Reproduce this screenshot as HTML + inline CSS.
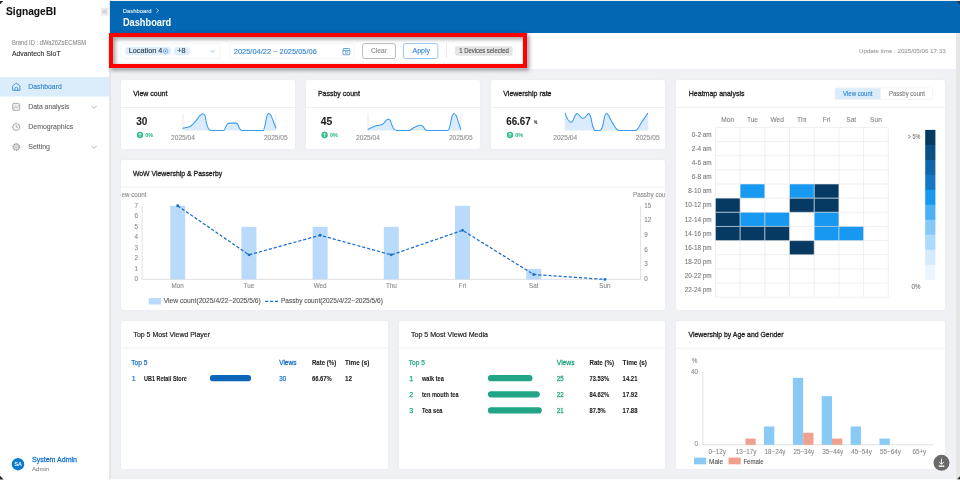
<!DOCTYPE html>
<html><head><meta charset="utf-8">
<style>
html,body{margin:0;padding:0}
body{width:960px;height:480px;overflow:hidden;position:relative;background:#f0f1f5;font-family:"Liberation Sans",sans-serif}
.a{position:absolute}
.card{position:absolute;background:#fff;border-radius:2px;box-shadow:0 0 1.5px rgba(0,0,0,0.07)}
svg{position:absolute;left:0;top:0;will-change:transform}
</style></head><body>
<div class="a" style="left:0;top:0;width:109px;height:480px;background:#fff"></div>
<div class="a" style="left:109px;top:0;width:1.5px;height:480px;background:#e4e5e9"></div>
<div class="a" style="left:110px;top:1px;width:850px;height:32px;background:#0467b3"></div>
<div class="a" style="left:110px;top:33px;width:846px;height:36px;background:#fff"></div>
<div class="a" style="left:956px;top:33px;width:4px;height:447px;background:#e6e6e6"></div>
<div class="a" style="left:110px;top:479px;width:846px;height:1px;background:#fbfbfc"></div>
<div class="card" style="left:121px;top:80px;width:174px;height:69px"></div>
<div class="card" style="left:305.6px;top:80px;width:174.7px;height:69px"></div>
<div class="card" style="left:491px;top:80px;width:174px;height:69px"></div>
<div class="card" style="left:676px;top:80px;width:269.3px;height:229.6px"></div>
<div class="card" style="left:121px;top:160px;width:544px;height:149.5px"></div>
<div class="card" style="left:121px;top:320.5px;width:267px;height:148.6px"></div>
<div class="card" style="left:398.7px;top:320.5px;width:266.3px;height:148.6px"></div>
<div class="card" style="left:676px;top:320.5px;width:269.3px;height:148.6px"></div>
<svg width="960" height="480" viewBox="0 0 960 480" font-family="Liberation Sans">
<text x="6" y="14.7" font-size="10.6" fill="#111" font-weight="bold" textLength="50" lengthAdjust="spacingAndGlyphs" stroke="#111" stroke-width="0.08">SignageBI</text>
<rect x="101" y="8" width="7.5" height="7.5" fill="#e9e9e9"/>
<path d="M104.4 10.2 L102.9 11.7 L104.4 13.2 M106.4 10.2 L104.9 11.7 L106.4 13.2" stroke="#9a9a9a" stroke-width="0.6" fill="none"/>
<text x="12" y="45.3" font-size="6.3" fill="#8e8e8e" textLength="74" lengthAdjust="spacingAndGlyphs" stroke="#8e8e8e" stroke-width="0.1">Brand ID : dWa26ZsECMSM</text>
<text x="12" y="56" font-size="7.1" fill="#2a2a2a" textLength="48.6" lengthAdjust="spacingAndGlyphs" stroke="#2a2a2a" stroke-width="0.1">Advantech SIoT</text>
<rect x="0" y="77" width="109" height="19.5" fill="#dbedfb"/>
<path d="M12.7 90.3 V86.6 Q12.7 85.8 13.4 85.2 L15.6 83.5 Q16.3 83 17 83.5 L19.2 85.2 Q19.9 85.8 19.9 86.6 V90.3 Z M14.9 90.3 V88.6 Q14.9 87.3 16.3 87.3 Q17.7 87.3 17.7 88.6 V90.3" stroke="#3f8fd8" stroke-width="0.95" fill="none" stroke-linejoin="round"/>
<text x="28.2" y="88.9" font-size="7.7" fill="#2f80d0" textLength="33.6" lengthAdjust="spacingAndGlyphs" stroke="#2f80d0" stroke-width="0.12">Dashboard</text>
<rect x="12.7" y="103.4" width="7.0" height="7.0" fill="#efefef" rx="1.3" stroke="#a8a8a8" stroke-width="0.9"/>
<path d="M13.2 109.0 L15.4 106.4 L17 107.6 L19.4 105.0" stroke="#a8a8a8" stroke-width="0.8" fill="none"/>
<text x="28.25" y="109.3" font-size="7.7" fill="#626262" textLength="41.1" lengthAdjust="spacingAndGlyphs" stroke="#626262" stroke-width="0.1">Data analysis</text>
<path d="M91.6 106.4 L94.1 108.2 L96.6 106.4" stroke="#9a9a9a" stroke-width="0.7" fill="none"/>
<circle cx="16.2" cy="127" r="3.5" fill="none" stroke="#9a9a9a" stroke-width="0.9"/>
<path d="M16.2 124.9 V127.2 H18.1" stroke="#9a9a9a" stroke-width="0.8" fill="none"/>
<text x="28.25" y="129.1" font-size="7.7" fill="#626262" textLength="44.9" lengthAdjust="spacingAndGlyphs" stroke="#626262" stroke-width="0.1">Demographics</text>
<circle cx="16.2" cy="147" r="3.2" fill="none" stroke="#9a9a9a" stroke-width="1.5" stroke-dasharray="1.2 0.8"/>
<circle cx="16.2" cy="147" r="2.4" fill="none" stroke="#9a9a9a" stroke-width="0.6"/>
<circle cx="16.2" cy="147" r="1.0" fill="none" stroke="#9a9a9a" stroke-width="0.6"/>
<text x="28.25" y="149.1" font-size="7.7" fill="#626262" textLength="21.75" lengthAdjust="spacingAndGlyphs" stroke="#626262" stroke-width="0.1">Setting</text>
<path d="M91.6 146.4 L94.1 148.2 L96.6 146.4" stroke="#9a9a9a" stroke-width="0.7" fill="none"/>
<circle cx="18" cy="464.2" r="6.2" fill="#0b7ad1"/>
<text x="18.1" y="466.3" font-size="5.4" fill="#fff" font-weight="bold" textLength="7.4" lengthAdjust="spacingAndGlyphs" text-anchor="middle">SA</text>
<text x="32" y="461.75" font-size="7.3" fill="#1a78d2" textLength="45" lengthAdjust="spacingAndGlyphs" stroke="#1a78d2" stroke-width="0.3">System Admin</text>
<text x="32" y="471" font-size="5.9" fill="#8a8a8a" textLength="17.2" lengthAdjust="spacingAndGlyphs" stroke="#8a8a8a" stroke-width="0.1">Admin</text>
<text x="122.7" y="12.6" font-size="6.2" fill="#e2edf7" textLength="28.8" lengthAdjust="spacingAndGlyphs" stroke="#e2edf7" stroke-width="0.1">Dashboard</text>
<path d="M156.4 8.6 L158.6 10.6 L156.4 12.6" stroke="#e2edf7" stroke-width="0.7" fill="none"/>
<text x="122.9" y="25.7" font-size="11.2" fill="#fff" font-weight="bold" textLength="48.3" lengthAdjust="spacingAndGlyphs">Dashboard</text>
<rect x="120.8" y="43.8" width="99.6" height="14.6" fill="#fff" rx="2" stroke="#ececec" stroke-width="0.6"/>
<rect x="125" y="47" width="46.2" height="8.2" fill="#dcedfb" rx="4"/>
<text x="128.8" y="53.1" font-size="7.0" fill="#354252" textLength="33.5" lengthAdjust="spacingAndGlyphs" stroke="#354252" stroke-width="0.15">Location 4</text>
<circle cx="165.6" cy="51.1" r="2.3" fill="none" stroke="#4a90d0" stroke-width="0.6"/><circle cx="165.6" cy="51.1" r="0.9" fill="#4a90d0"/>
<rect x="173.8" y="47" width="16.2" height="8.2" fill="#dcedfb" rx="4"/>
<text x="177.2" y="53.1" font-size="7.0" fill="#354252" textLength="8.3" lengthAdjust="spacingAndGlyphs" stroke="#354252" stroke-width="0.15">+8</text>
<path d="M210.6 50.4 L212.6 52.1 L214.6 50.4" stroke="#5a9ad8" stroke-width="0.6" fill="none"/>
<rect x="229.6" y="43.8" width="124.8" height="14.6" fill="#fff" rx="2" stroke="#ececec" stroke-width="0.6"/>
<text x="233.75" y="54" font-size="7.9" fill="#2f80d1" textLength="83.1" lengthAdjust="spacingAndGlyphs" stroke="#2f80d1" stroke-width="0.1">2025/04/22 ~ 2025/05/06</text>
<rect x="343" y="48.5" width="6.8" height="6.3" fill="#fff" rx="1" stroke="#3d8ad4" stroke-width="0.8"/>
<path d="M343 50.4 H349.8" stroke="#3d8ad4" stroke-width="0.8" fill="none"/>
<rect x="345.3" y="51.7" width="2.2" height="1.9" fill="none" stroke="#3d8ad4" stroke-width="0.5"/>
<rect x="362.6" y="43.6" width="32.9" height="14.9" fill="#fff" rx="2" stroke="#a9a9a9" stroke-width="0.8"/>
<text x="371" y="53.3" font-size="7.1" fill="#8c8c8c" textLength="16" lengthAdjust="spacingAndGlyphs" stroke="#8c8c8c" stroke-width="0.1">Clear</text>
<rect x="403.4" y="43.6" width="34.5" height="14.9" fill="#fff" rx="2" stroke="#7cb6ec" stroke-width="0.8"/>
<text x="412.5" y="53.3" font-size="7.1" fill="#2f80d1" textLength="17.5" lengthAdjust="spacingAndGlyphs" stroke="#2f80d1" stroke-width="0.1">Apply</text>
<path d="M446.5 43 V58.6" stroke="#e6e6e6" stroke-width="0.8" fill="none"/>
<rect x="455" y="46.3" width="57.6" height="9.5" fill="#e4e4e4" rx="2"/>
<text x="459.2" y="53.3" font-size="6.3" fill="#4f4f4f" textLength="49.7" lengthAdjust="spacingAndGlyphs" stroke="#4f4f4f" stroke-width="0.1">1 Devices selected</text>
<text x="859" y="52.8" font-size="6.2" fill="#9c9c9c" textLength="86.6" lengthAdjust="spacingAndGlyphs" stroke="#9c9c9c" stroke-width="0.1">Update time : 2025/05/06 17:33</text>
<text x="133.3" y="95.9" font-size="7.7" fill="#1f1f1f" textLength="34.1" lengthAdjust="spacingAndGlyphs" stroke="#1f1f1f" stroke-width="0.32">View count</text>
<path d="M121 107.5 H295" stroke="#ebebeb" stroke-width="0.8" fill="none"/>
<text x="136.2" y="124.5" font-size="10.6" fill="#1e1e1e" font-weight="bold" textLength="11.2" lengthAdjust="spacingAndGlyphs" stroke="#1e1e1e" stroke-width="0.08">30</text>
<circle cx="140" cy="135.0" r="3.15" fill="#2dbd86"/>
<path d="M140 137.0 V133.3 M138.5 134.7 L140 133.2 L141.5 134.7" stroke="#fff" stroke-width="0.75" fill="none"/>
<text x="145.3" y="137.0" font-size="6.2" fill="#2dbd86" font-weight="bold" textLength="7.8" lengthAdjust="spacingAndGlyphs" stroke="#2dbd86" stroke-width="0.08">0%</text>
<text x="317.90000000000003" y="95.9" font-size="7.7" fill="#1f1f1f" textLength="42.0" lengthAdjust="spacingAndGlyphs" stroke="#1f1f1f" stroke-width="0.32">Passby count</text>
<path d="M305.6 107.5 H480.3" stroke="#ebebeb" stroke-width="0.8" fill="none"/>
<text x="320.8" y="124.5" font-size="10.6" fill="#1e1e1e" font-weight="bold" textLength="11.5" lengthAdjust="spacingAndGlyphs" stroke="#1e1e1e" stroke-width="0.08">45</text>
<circle cx="324.6" cy="135.0" r="3.15" fill="#2dbd86"/>
<path d="M324.6 137.0 V133.3 M323.1 134.7 L324.6 133.2 L326.1 134.7" stroke="#fff" stroke-width="0.75" fill="none"/>
<text x="329.90000000000003" y="137.0" font-size="6.2" fill="#2dbd86" font-weight="bold" textLength="7.8" lengthAdjust="spacingAndGlyphs" stroke="#2dbd86" stroke-width="0.08">0%</text>
<text x="503.3" y="95.9" font-size="7.7" fill="#1f1f1f" textLength="48.2" lengthAdjust="spacingAndGlyphs" stroke="#1f1f1f" stroke-width="0.32">Viewership rate</text>
<path d="M491 107.5 H665" stroke="#ebebeb" stroke-width="0.8" fill="none"/>
<text x="506.2" y="124.5" font-size="10.6" fill="#1e1e1e" font-weight="bold" textLength="24.6" lengthAdjust="spacingAndGlyphs" stroke="#1e1e1e" stroke-width="0.08">66.67</text>
<circle cx="510" cy="135.0" r="3.15" fill="#2dbd86"/>
<path d="M510 137.0 V133.3 M508.5 134.7 L510 133.2 L511.5 134.7" stroke="#fff" stroke-width="0.75" fill="none"/>
<text x="515.3" y="137.0" font-size="6.2" fill="#2dbd86" font-weight="bold" textLength="7.8" lengthAdjust="spacingAndGlyphs" stroke="#2dbd86" stroke-width="0.08">0%</text>
<text x="534" y="124.2" font-size="4.6" fill="#333" font-weight="bold" textLength="3.3" lengthAdjust="spacingAndGlyphs" stroke="#333" stroke-width="0.08">%</text>
<path d="M183 113.4 V130.5" stroke="#d6d6d6" stroke-width="0.6" fill="none"/>
<path d="M275.8 113.4 V130.5" stroke="#d6d6d6" stroke-width="0.6" fill="none"/>
<path d="M183.01 128.29 C185.22 127.75 187.43 127.53 189.64 126.67 C191.86 125.80 194.07 122.70 196.28 120.30 C197.68 118.78 199.08 116.26 200.48 115.16 C201.29 114.51 202.10 113.67 202.91 113.67 C203.50 113.67 204.09 114.26 204.68 115.02 C205.35 115.89 206.03 121.87 206.71 123.96 C207.47 126.33 208.24 128.84 209.01 129.37 C209.91 130.00 210.81 130.46 211.72 130.46 C215.78 130.46 219.84 130.46 223.90 130.46 C224.58 130.46 225.26 127.54 225.93 126.39 C226.61 125.25 227.29 123.58 227.97 123.42 C228.64 123.25 229.32 123.14 230.00 123.14 C231.80 123.14 233.61 123.14 235.41 123.14 C236.09 123.14 236.77 123.50 237.44 123.96 C238.12 124.41 238.80 127.33 239.48 128.29 C240.15 129.25 240.83 130.46 241.51 130.46 C248.73 130.46 255.95 130.46 263.17 130.46 C263.85 130.46 264.53 127.13 265.20 124.63 C265.74 122.64 266.29 117.93 266.83 116.51 C267.41 114.97 268.00 113.40 268.59 113.40 C269.18 113.40 269.76 113.93 270.35 114.48 C271.25 115.32 272.15 118.34 273.06 120.57 C273.96 122.81 274.86 125.54 275.77 128.02 L275.8 130.5 L183 130.5 Z" fill="#d9ebfd" stroke="none"/>
<path d="M183.01 128.29 C185.22 127.75 187.43 127.53 189.64 126.67 C191.86 125.80 194.07 122.70 196.28 120.30 C197.68 118.78 199.08 116.26 200.48 115.16 C201.29 114.51 202.10 113.67 202.91 113.67 C203.50 113.67 204.09 114.26 204.68 115.02 C205.35 115.89 206.03 121.87 206.71 123.96 C207.47 126.33 208.24 128.84 209.01 129.37 C209.91 130.00 210.81 130.46 211.72 130.46 C215.78 130.46 219.84 130.46 223.90 130.46 C224.58 130.46 225.26 127.54 225.93 126.39 C226.61 125.25 227.29 123.58 227.97 123.42 C228.64 123.25 229.32 123.14 230.00 123.14 C231.80 123.14 233.61 123.14 235.41 123.14 C236.09 123.14 236.77 123.50 237.44 123.96 C238.12 124.41 238.80 127.33 239.48 128.29 C240.15 129.25 240.83 130.46 241.51 130.46 C248.73 130.46 255.95 130.46 263.17 130.46 C263.85 130.46 264.53 127.13 265.20 124.63 C265.74 122.64 266.29 117.93 266.83 116.51 C267.41 114.97 268.00 113.40 268.59 113.40 C269.18 113.40 269.76 113.93 270.35 114.48 C271.25 115.32 272.15 118.34 273.06 120.57 C273.96 122.81 274.86 125.54 275.77 128.02" stroke="#3a9bf3" stroke-width="1.05" fill="none" stroke-linejoin="round" stroke-linecap="round"/>
<text x="183" y="139.5" font-size="6.6" fill="#8e8e8e" textLength="23.8" lengthAdjust="spacingAndGlyphs" text-anchor="middle" stroke="#8e8e8e" stroke-width="0.1">2025/04</text>
<text x="275.8" y="139.5" font-size="6.6" fill="#8e8e8e" textLength="23.8" lengthAdjust="spacingAndGlyphs" text-anchor="middle" stroke="#8e8e8e" stroke-width="0.1">2025/05</text>
<path d="M368 113.4 V130.5" stroke="#d6d6d6" stroke-width="0.6" fill="none"/>
<path d="M460.8 113.4 V130.5" stroke="#d6d6d6" stroke-width="0.6" fill="none"/>
<path d="M368.01 129.37 C369.68 128.56 371.35 127.59 373.02 126.94 C374.37 126.40 375.73 125.92 377.08 125.58 C378.66 125.18 380.24 125.17 381.82 124.63 C382.86 124.28 383.90 122.89 384.94 121.93 C385.93 121.00 386.92 118.95 387.91 118.95 C388.64 118.95 389.36 119.48 390.08 120.17 C390.71 120.76 391.35 123.91 391.98 125.31 C392.65 126.81 393.33 128.55 394.01 129.10 C394.91 129.84 395.81 130.46 396.72 130.46 C400.78 130.46 404.84 130.46 408.90 130.46 C410.48 130.46 412.06 128.50 413.64 127.75 C415.67 126.79 417.70 125.31 419.74 125.31 C420.05 125.31 420.37 125.31 420.68 125.31 C421.50 125.31 422.31 126.02 423.12 126.67 C423.80 127.20 424.48 128.81 425.15 129.37 C425.74 129.86 426.33 130.46 426.91 130.46 C434.00 130.46 441.09 130.46 448.17 130.46 C448.85 130.46 449.53 126.97 450.20 124.63 C450.88 122.30 451.56 117.24 452.23 115.83 C452.82 114.62 453.41 113.40 453.99 113.40 C454.58 113.40 455.17 114.07 455.75 114.75 C456.61 115.75 457.47 119.42 458.33 121.93 C459.14 124.30 459.95 126.89 460.77 129.37 L460.8 130.5 L368 130.5 Z" fill="#d9ebfd" stroke="none"/>
<path d="M368.01 129.37 C369.68 128.56 371.35 127.59 373.02 126.94 C374.37 126.40 375.73 125.92 377.08 125.58 C378.66 125.18 380.24 125.17 381.82 124.63 C382.86 124.28 383.90 122.89 384.94 121.93 C385.93 121.00 386.92 118.95 387.91 118.95 C388.64 118.95 389.36 119.48 390.08 120.17 C390.71 120.76 391.35 123.91 391.98 125.31 C392.65 126.81 393.33 128.55 394.01 129.10 C394.91 129.84 395.81 130.46 396.72 130.46 C400.78 130.46 404.84 130.46 408.90 130.46 C410.48 130.46 412.06 128.50 413.64 127.75 C415.67 126.79 417.70 125.31 419.74 125.31 C420.05 125.31 420.37 125.31 420.68 125.31 C421.50 125.31 422.31 126.02 423.12 126.67 C423.80 127.20 424.48 128.81 425.15 129.37 C425.74 129.86 426.33 130.46 426.91 130.46 C434.00 130.46 441.09 130.46 448.17 130.46 C448.85 130.46 449.53 126.97 450.20 124.63 C450.88 122.30 451.56 117.24 452.23 115.83 C452.82 114.62 453.41 113.40 453.99 113.40 C454.58 113.40 455.17 114.07 455.75 114.75 C456.61 115.75 457.47 119.42 458.33 121.93 C459.14 124.30 459.95 126.89 460.77 129.37" stroke="#3a9bf3" stroke-width="1.05" fill="none" stroke-linejoin="round" stroke-linecap="round"/>
<text x="368" y="139.5" font-size="6.6" fill="#8e8e8e" textLength="23.8" lengthAdjust="spacingAndGlyphs" text-anchor="middle" stroke="#8e8e8e" stroke-width="0.1">2025/04</text>
<text x="460.8" y="139.5" font-size="6.6" fill="#8e8e8e" textLength="23.8" lengthAdjust="spacingAndGlyphs" text-anchor="middle" stroke="#8e8e8e" stroke-width="0.1">2025/05</text>
<path d="M565.2 113.4 V130.5" stroke="#d6d6d6" stroke-width="0.6" fill="none"/>
<path d="M647.7 113.4 V130.5" stroke="#d6d6d6" stroke-width="0.6" fill="none"/>
<path d="M565.20 113.40 C565.20 113.40 568.15 122.29 571.09 122.29 C574.04 122.29 573.58 114.49 576.99 113.40 C579.48 113.40 579.93 118.53 582.88 118.53 C585.83 118.53 586.99 113.40 588.77 113.40 C592.89 117.58 590.22 124.05 594.66 130.50 C596.11 130.50 599.11 130.50 600.56 130.50 C605.00 124.05 602.78 115.85 606.45 113.40 C608.67 113.40 609.24 118.13 612.34 122.63 C615.13 126.68 614.55 128.04 618.24 130.50 C620.44 130.50 621.18 130.50 624.13 130.50 C627.08 130.50 627.08 130.50 630.02 130.50 C632.97 130.50 633.78 130.50 635.91 130.50 C639.67 127.77 638.86 126.23 641.81 121.95 C644.75 117.68 647.70 113.40 647.70 113.40 L647.7 130.5 L565.2 130.5 Z" fill="#d9ebfd" stroke="none"/>
<path d="M565.20 113.40 C565.20 113.40 568.15 122.29 571.09 122.29 C574.04 122.29 573.58 114.49 576.99 113.40 C579.48 113.40 579.93 118.53 582.88 118.53 C585.83 118.53 586.99 113.40 588.77 113.40 C592.89 117.58 590.22 124.05 594.66 130.50 C596.11 130.50 599.11 130.50 600.56 130.50 C605.00 124.05 602.78 115.85 606.45 113.40 C608.67 113.40 609.24 118.13 612.34 122.63 C615.13 126.68 614.55 128.04 618.24 130.50 C620.44 130.50 621.18 130.50 624.13 130.50 C627.08 130.50 627.08 130.50 630.02 130.50 C632.97 130.50 633.78 130.50 635.91 130.50 C639.67 127.77 638.86 126.23 641.81 121.95 C644.75 117.68 647.70 113.40 647.70 113.40" stroke="#3a9bf3" stroke-width="1.05" fill="none" stroke-linejoin="round" stroke-linecap="round"/>
<text x="565.2" y="139.5" font-size="6.6" fill="#8e8e8e" textLength="23.8" lengthAdjust="spacingAndGlyphs" text-anchor="middle" stroke="#8e8e8e" stroke-width="0.1">2025/04</text>
<text x="647.7" y="139.5" font-size="6.6" fill="#8e8e8e" textLength="23.8" lengthAdjust="spacingAndGlyphs" text-anchor="middle" stroke="#8e8e8e" stroke-width="0.1">2025/05</text>
<text x="132.9" y="176.3" font-size="7.7" fill="#1f1f1f" textLength="89.4" lengthAdjust="spacingAndGlyphs" stroke="#1f1f1f" stroke-width="0.32">WoW Viewership &amp; Passerby</text>
<path d="M121 187 H665" stroke="#ebebeb" stroke-width="0.8" fill="none"/>
<clipPath id="c5"><rect x="121" y="160" width="544" height="149.5"/></clipPath>
<g clip-path="url(#c5)">
<text x="146.6" y="197.3" font-size="6.3" fill="#8a8a8a" textLength="30.7" lengthAdjust="spacingAndGlyphs" text-anchor="end" stroke="#8a8a8a" stroke-width="0.1">View count</text>
<text x="633" y="197.3" font-size="6.3" fill="#8a8a8a" textLength="37.8" lengthAdjust="spacingAndGlyphs" stroke="#8a8a8a" stroke-width="0.1">Passby count</text>
</g>
<text x="137.9" y="281.2" font-size="6.3" fill="#8a8a8a" text-anchor="end" stroke="#8a8a8a" stroke-width="0.1">0</text>
<text x="137.9" y="270.69" font-size="6.3" fill="#8a8a8a" text-anchor="end" stroke="#8a8a8a" stroke-width="0.1">1</text>
<text x="137.9" y="260.17" font-size="6.3" fill="#8a8a8a" text-anchor="end" stroke="#8a8a8a" stroke-width="0.1">2</text>
<text x="137.9" y="249.66" font-size="6.3" fill="#8a8a8a" text-anchor="end" stroke="#8a8a8a" stroke-width="0.1">3</text>
<text x="137.9" y="239.14" font-size="6.3" fill="#8a8a8a" text-anchor="end" stroke="#8a8a8a" stroke-width="0.1">4</text>
<text x="137.9" y="228.63" font-size="6.3" fill="#8a8a8a" text-anchor="end" stroke="#8a8a8a" stroke-width="0.1">5</text>
<text x="137.9" y="218.11" font-size="6.3" fill="#8a8a8a" text-anchor="end" stroke="#8a8a8a" stroke-width="0.1">6</text>
<text x="137.9" y="207.6" font-size="6.3" fill="#8a8a8a" text-anchor="end" stroke="#8a8a8a" stroke-width="0.1">7</text>
<text x="644.3" y="281.2" font-size="6.3" fill="#8a8a8a" stroke="#8a8a8a" stroke-width="0.1">0</text>
<text x="644.3" y="266.48" font-size="6.3" fill="#8a8a8a" stroke="#8a8a8a" stroke-width="0.1">3</text>
<text x="644.3" y="251.76" font-size="6.3" fill="#8a8a8a" stroke="#8a8a8a" stroke-width="0.1">6</text>
<text x="644.3" y="237.04" font-size="6.3" fill="#8a8a8a" stroke="#8a8a8a" stroke-width="0.1">9</text>
<text x="644.3" y="222.32" font-size="6.3" fill="#8a8a8a" stroke="#8a8a8a" stroke-width="0.1">12</text>
<text x="644.3" y="207.6" font-size="6.3" fill="#8a8a8a" stroke="#8a8a8a" stroke-width="0.1">15</text>
<path d="M142.1 205.8 V279.4 H640.6 V205.8" stroke="#d9d9d9" stroke-width="0.8" fill="none"/>
<rect x="170.2" y="205.8" width="15" height="73.6" fill="#b9dafb"/>
<rect x="241.41" y="226.83" width="15" height="52.57" fill="#b9dafb"/>
<rect x="312.62" y="226.83" width="15" height="52.57" fill="#b9dafb"/>
<rect x="383.83" y="226.83" width="15" height="52.57" fill="#b9dafb"/>
<rect x="455.04" y="205.8" width="15" height="73.6" fill="#b9dafb"/>
<rect x="526.25" y="268.89" width="15" height="10.51" fill="#b9dafb"/>
<path d="M177.70 205.80 L248.91 254.87 L320.12 235.24 L391.33 254.87 L462.54 230.33 L533.75 274.49 L604.96 279.40" stroke="#1a6ecf" stroke-width="1.25" fill="none" stroke-dasharray="3.2 1.9"/>
<circle cx="177.70" cy="205.80" r="1.45" fill="#1a6ecf"/>
<circle cx="248.91" cy="254.87" r="1.45" fill="#1a6ecf"/>
<circle cx="320.12" cy="235.24" r="1.45" fill="#1a6ecf"/>
<circle cx="391.33" cy="254.87" r="1.45" fill="#1a6ecf"/>
<circle cx="462.54" cy="230.33" r="1.45" fill="#1a6ecf"/>
<circle cx="533.75" cy="274.49" r="1.45" fill="#1a6ecf"/>
<circle cx="604.96" cy="279.40" r="1.45" fill="#1a6ecf"/>
<text x="177.7" y="288.1" font-size="6.3" fill="#8a8a8a" text-anchor="middle" stroke="#8a8a8a" stroke-width="0.1">Mon</text>
<text x="248.91" y="288.1" font-size="6.3" fill="#8a8a8a" text-anchor="middle" stroke="#8a8a8a" stroke-width="0.1">Tue</text>
<text x="320.12" y="288.1" font-size="6.3" fill="#8a8a8a" text-anchor="middle" stroke="#8a8a8a" stroke-width="0.1">Wed</text>
<text x="391.33" y="288.1" font-size="6.3" fill="#8a8a8a" text-anchor="middle" stroke="#8a8a8a" stroke-width="0.1">Thu</text>
<text x="462.54" y="288.1" font-size="6.3" fill="#8a8a8a" text-anchor="middle" stroke="#8a8a8a" stroke-width="0.1">Fri</text>
<text x="533.75" y="288.1" font-size="6.3" fill="#8a8a8a" text-anchor="middle" stroke="#8a8a8a" stroke-width="0.1">Sat</text>
<text x="604.96" y="288.1" font-size="6.3" fill="#8a8a8a" text-anchor="middle" stroke="#8a8a8a" stroke-width="0.1">Sun</text>
<rect x="148.8" y="298.1" width="12.2" height="6.4" fill="#b9dafb"/>
<text x="163.7" y="303.2" font-size="6.6" fill="#555" textLength="97.1" lengthAdjust="spacingAndGlyphs" stroke="#555" stroke-width="0.1">View count(2025/4/22~2025/5/6)</text>
<path d="M265.2 301.3 H278.4" stroke="#1a6ecf" stroke-width="1.25" fill="none" stroke-dasharray="3.0 1.9"/>
<text x="281" y="303.2" font-size="6.6" fill="#555" textLength="101.8" lengthAdjust="spacingAndGlyphs" stroke="#555" stroke-width="0.1">Passby count(2025/4/22~2025/5/6)</text>
<text x="688.8" y="96.0" font-size="7.7" fill="#1f1f1f" textLength="55.7" lengthAdjust="spacingAndGlyphs" stroke="#1f1f1f" stroke-width="0.32">Heatmap analysis</text>
<path d="M676 107.4 H945.3" stroke="#ebebeb" stroke-width="0.8" fill="none"/>
<rect x="834.9" y="87.9" width="97.7" height="11.6" fill="#fff" rx="2" stroke="#ececec" stroke-width="0.6"/>
<rect x="835.2" y="88.2" width="45.4" height="11.0" fill="#d9ecfb"/>
<text x="843" y="96.0" font-size="6.6" fill="#2f80d0" textLength="29.5" lengthAdjust="spacingAndGlyphs" stroke="#2f80d0" stroke-width="0.1">View count</text>
<text x="889" y="96.0" font-size="6.6" fill="#7a7a7a" textLength="36" lengthAdjust="spacingAndGlyphs" stroke="#7a7a7a" stroke-width="0.1">Passby count</text>
<text x="727.75" y="122.1" font-size="6.6" fill="#858585" text-anchor="middle" stroke="#858585" stroke-width="0.1">Mon</text>
<text x="752.45" y="122.1" font-size="6.6" fill="#858585" text-anchor="middle" stroke="#858585" stroke-width="0.1">Tue</text>
<text x="777.15" y="122.1" font-size="6.6" fill="#858585" text-anchor="middle" stroke="#858585" stroke-width="0.1">Wed</text>
<text x="801.85" y="122.1" font-size="6.6" fill="#858585" text-anchor="middle" stroke="#858585" stroke-width="0.1">Thr</text>
<text x="826.55" y="122.1" font-size="6.6" fill="#858585" text-anchor="middle" stroke="#858585" stroke-width="0.1">Fri</text>
<text x="851.25" y="122.1" font-size="6.6" fill="#858585" text-anchor="middle" stroke="#858585" stroke-width="0.1">Sat</text>
<text x="875.95" y="122.1" font-size="6.6" fill="#858585" text-anchor="middle" stroke="#858585" stroke-width="0.1">Sun</text>
<text x="711.7" y="136.67" font-size="6.4" fill="#7a7a7a" text-anchor="end" stroke="#7a7a7a" stroke-width="0.1">0-2 am</text>
<text x="711.7" y="150.82" font-size="6.4" fill="#7a7a7a" text-anchor="end" stroke="#7a7a7a" stroke-width="0.1">2-4 am</text>
<text x="711.7" y="164.97" font-size="6.4" fill="#7a7a7a" text-anchor="end" stroke="#7a7a7a" stroke-width="0.1">4-6 am</text>
<text x="711.7" y="179.12" font-size="6.4" fill="#7a7a7a" text-anchor="end" stroke="#7a7a7a" stroke-width="0.1">6-8 am</text>
<text x="711.7" y="193.28" font-size="6.4" fill="#7a7a7a" text-anchor="end" stroke="#7a7a7a" stroke-width="0.1">8-10 am</text>
<text x="711.7" y="207.43" font-size="6.4" fill="#7a7a7a" text-anchor="end" stroke="#7a7a7a" stroke-width="0.1">10-12 pm</text>
<text x="711.7" y="221.57" font-size="6.4" fill="#7a7a7a" text-anchor="end" stroke="#7a7a7a" stroke-width="0.1">12-14 pm</text>
<text x="711.7" y="235.72" font-size="6.4" fill="#7a7a7a" text-anchor="end" stroke="#7a7a7a" stroke-width="0.1">14-16 pm</text>
<text x="711.7" y="249.88" font-size="6.4" fill="#7a7a7a" text-anchor="end" stroke="#7a7a7a" stroke-width="0.1">16-18 pm</text>
<text x="711.7" y="264.03" font-size="6.4" fill="#7a7a7a" text-anchor="end" stroke="#7a7a7a" stroke-width="0.1">18-20 pm</text>
<text x="711.7" y="278.18" font-size="6.4" fill="#7a7a7a" text-anchor="end" stroke="#7a7a7a" stroke-width="0.1">20-22 pm</text>
<text x="711.7" y="292.32" font-size="6.4" fill="#7a7a7a" text-anchor="end" stroke="#7a7a7a" stroke-width="0.1">22-24 pm</text>
<rect x="740.1" y="184.0" width="24.7" height="14.15" fill="#1799f2"/>
<rect x="789.5" y="184.0" width="24.7" height="14.15" fill="#1799f2"/>
<rect x="814.2" y="184.0" width="24.7" height="14.15" fill="#063a63"/>
<rect x="715.4" y="198.15" width="24.7" height="14.15" fill="#063a63"/>
<rect x="789.5" y="198.15" width="24.7" height="14.15" fill="#063a63"/>
<rect x="814.2" y="198.15" width="24.7" height="14.15" fill="#063a63"/>
<rect x="715.4" y="212.3" width="24.7" height="14.15" fill="#063a63"/>
<rect x="740.1" y="212.3" width="24.7" height="14.15" fill="#1799f2"/>
<rect x="764.8" y="212.3" width="24.7" height="14.15" fill="#1799f2"/>
<rect x="814.2" y="212.3" width="24.7" height="14.15" fill="#1799f2"/>
<rect x="715.4" y="226.45" width="24.7" height="14.15" fill="#063a63"/>
<rect x="740.1" y="226.45" width="24.7" height="14.15" fill="#063a63"/>
<rect x="764.8" y="226.45" width="24.7" height="14.15" fill="#063a63"/>
<rect x="814.2" y="226.45" width="24.7" height="14.15" fill="#1799f2"/>
<rect x="838.9" y="226.45" width="24.7" height="14.15" fill="#1799f2"/>
<rect x="789.5" y="240.6" width="24.7" height="14.15" fill="#063a63"/>
<path d="M715.40 127.4 V297.20 M740.10 127.4 V297.20 M764.80 127.4 V297.20 M789.50 127.4 V297.20 M814.20 127.4 V297.20 M838.90 127.4 V297.20 M863.60 127.4 V297.20 M888.30 127.4 V297.20 M715.4 127.40 H888.30 M715.4 141.55 H888.30 M715.4 155.70 H888.30 M715.4 169.85 H888.30 M715.4 184.00 H888.30 M715.4 198.15 H888.30 M715.4 212.30 H888.30 M715.4 226.45 H888.30 M715.4 240.60 H888.30 M715.4 254.75 H888.30 M715.4 268.90 H888.30 M715.4 283.05 H888.30 M715.4 297.20 H888.30" stroke="#e4e4e4" stroke-width="0.6" fill="none"/>
<path d="M814.20 184.00 V198.15 M789.50 198.15 H814.20 M814.20 198.15 H838.90 M715.40 212.30 H740.10 M814.20 198.15 V212.30 M814.20 212.30 H838.90 M740.10 212.30 V226.45 M715.40 226.45 H740.10 M764.80 212.30 V226.45 M740.10 226.45 H764.80 M764.80 226.45 H789.50 M814.20 226.45 H838.90 M740.10 226.45 V240.60 M764.80 226.45 V240.60 M838.90 226.45 V240.60" stroke="#8fb3cf" stroke-width="0.5" fill="none"/>
<rect x="925.2" y="129.9" width="10.2" height="15.1" fill="#063a63"/>
<rect x="925.2" y="144.89" width="10.2" height="15.1" fill="#0b4f86"/>
<rect x="925.2" y="159.88" width="10.2" height="15.1" fill="#0f66a8"/>
<rect x="925.2" y="174.87" width="10.2" height="15.1" fill="#1479c4"/>
<rect x="925.2" y="189.86" width="10.2" height="15.1" fill="#1799f2"/>
<rect x="925.2" y="204.85" width="10.2" height="15.1" fill="#4cb0f6"/>
<rect x="925.2" y="219.84" width="10.2" height="15.1" fill="#86c9f8"/>
<rect x="925.2" y="234.83" width="10.2" height="15.1" fill="#acdafa"/>
<rect x="925.2" y="249.82" width="10.2" height="15.1" fill="#d4ebfc"/>
<rect x="925.2" y="264.81" width="10.2" height="15.1" fill="#eaf5fe"/>
<text x="920.3" y="138.9" font-size="6.3" fill="#777" textLength="12.5" lengthAdjust="spacingAndGlyphs" text-anchor="end" stroke="#777" stroke-width="0.1">&gt; 5%</text>
<text x="920.4" y="288.7" font-size="6.3" fill="#777" textLength="8.9" lengthAdjust="spacingAndGlyphs" text-anchor="end" stroke="#777" stroke-width="0.1">0%</text>
<text x="133.4" y="336.6" font-size="7.8" fill="#222" textLength="76.6" lengthAdjust="spacingAndGlyphs" stroke="#222" stroke-width="0.2">Top 5 Most Viewd Player</text>
<path d="M121 348 H388" stroke="#ebebeb" stroke-width="0.8" fill="none"/>
<text x="131.2" y="364.6" font-size="7.6" fill="#1f73c6" textLength="16.1" lengthAdjust="spacingAndGlyphs" stroke="#1f73c6" stroke-width="0.25">Top 5</text>
<text x="279.2" y="364.6" font-size="7.2" fill="#1f73c6" textLength="17.2" lengthAdjust="spacingAndGlyphs" stroke="#1f73c6" stroke-width="0.3">Views</text>
<text x="311.9" y="364.6" font-size="7.0" fill="#222" font-weight="bold" textLength="24.3" lengthAdjust="spacingAndGlyphs" stroke="#222" stroke-width="0.08">Rate (%)</text>
<text x="345" y="364.6" font-size="7.0" fill="#222" font-weight="bold" textLength="24.3" lengthAdjust="spacingAndGlyphs" stroke="#222" stroke-width="0.08">Time (s)</text>
<text x="131.8" y="380.5" font-size="7.0" fill="#1f73c6" stroke="#1f73c6" stroke-width="0.2">1</text>
<text x="144" y="380.5" font-size="7.1" fill="#222" font-weight="bold" textLength="42.9" lengthAdjust="spacingAndGlyphs" stroke="#222" stroke-width="0.08">UB1 Retail Store</text>
<rect x="209.9" y="375.1" width="41.2" height="6.2" fill="#0b65b8" rx="3.1"/>
<text x="279.2" y="380.5" font-size="7.0" fill="#1f73c6" textLength="6.9" lengthAdjust="spacingAndGlyphs" stroke="#1f73c6" stroke-width="0.25">30</text>
<text x="311.9" y="380.5" font-size="6.8" fill="#222" font-weight="bold" textLength="19.8" lengthAdjust="spacingAndGlyphs" stroke="#222" stroke-width="0.08">66.67%</text>
<text x="345" y="380.5" font-size="6.8" fill="#222" font-weight="bold" textLength="7.0" lengthAdjust="spacingAndGlyphs" stroke="#222" stroke-width="0.08">12</text>
<text x="410.9" y="336.6" font-size="7.8" fill="#222" textLength="77.1" lengthAdjust="spacingAndGlyphs" stroke="#222" stroke-width="0.2">Top 5 Most Viewd Media</text>
<path d="M398.7 348 H665" stroke="#ebebeb" stroke-width="0.8" fill="none"/>
<text x="408.8" y="364.6" font-size="7.6" fill="#23a584" textLength="16.1" lengthAdjust="spacingAndGlyphs" stroke="#23a584" stroke-width="0.25">Top 5</text>
<text x="556.8" y="364.6" font-size="7.2" fill="#23a584" textLength="17.7" lengthAdjust="spacingAndGlyphs" stroke="#23a584" stroke-width="0.3">Views</text>
<text x="589.5" y="364.6" font-size="7.0" fill="#222" font-weight="bold" textLength="24.5" lengthAdjust="spacingAndGlyphs" stroke="#222" stroke-width="0.08">Rate (%)</text>
<text x="622.6" y="364.6" font-size="7.0" fill="#222" font-weight="bold" textLength="24.4" lengthAdjust="spacingAndGlyphs" stroke="#222" stroke-width="0.08">Time (s)</text>
<text x="409.3" y="380.5" font-size="7.0" fill="#23a584" stroke="#23a584" stroke-width="0.25">1</text>
<text x="422" y="380.5" font-size="7.1" fill="#222" font-weight="bold" textLength="21.8" lengthAdjust="spacingAndGlyphs" stroke="#222" stroke-width="0.08">walk tea</text>
<rect x="487.9" y="375.1" width="44.6" height="6.2" fill="#22a584" rx="3.1"/>
<text x="556.8" y="380.5" font-size="7.0" fill="#23a584" textLength="6.8" lengthAdjust="spacingAndGlyphs" stroke="#23a584" stroke-width="0.3">25</text>
<text x="589.5" y="380.5" font-size="7.0" fill="#222" font-weight="bold" textLength="19.6" lengthAdjust="spacingAndGlyphs" stroke="#222" stroke-width="0.08">73.53%</text>
<text x="622.6" y="380.5" font-size="7.0" fill="#222" font-weight="bold" textLength="14.9" lengthAdjust="spacingAndGlyphs" stroke="#222" stroke-width="0.08">14.21</text>
<text x="409.3" y="396.6" font-size="7.0" fill="#23a584" stroke="#23a584" stroke-width="0.25">2</text>
<text x="422" y="396.6" font-size="7.1" fill="#222" font-weight="bold" textLength="36.5" lengthAdjust="spacingAndGlyphs" stroke="#222" stroke-width="0.08">ten mouth tea</text>
<rect x="487.9" y="391.2" width="51.9" height="6.2" fill="#22a584" rx="3.1"/>
<text x="556.8" y="396.6" font-size="7.0" fill="#23a584" textLength="6.8" lengthAdjust="spacingAndGlyphs" stroke="#23a584" stroke-width="0.3">22</text>
<text x="589.5" y="396.6" font-size="7.0" fill="#222" font-weight="bold" textLength="19.6" lengthAdjust="spacingAndGlyphs" stroke="#222" stroke-width="0.08">84.62%</text>
<text x="622.6" y="396.6" font-size="7.0" fill="#222" font-weight="bold" textLength="14.9" lengthAdjust="spacingAndGlyphs" stroke="#222" stroke-width="0.08">17.92</text>
<text x="409.3" y="412.7" font-size="7.0" fill="#23a584" stroke="#23a584" stroke-width="0.25">3</text>
<text x="422" y="412.7" font-size="7.1" fill="#222" font-weight="bold" textLength="20.5" lengthAdjust="spacingAndGlyphs" stroke="#222" stroke-width="0.08">Tea sea</text>
<rect x="487.9" y="407.3" width="53.9" height="6.2" fill="#22a584" rx="3.1"/>
<text x="556.8" y="412.7" font-size="7.0" fill="#23a584" textLength="6.8" lengthAdjust="spacingAndGlyphs" stroke="#23a584" stroke-width="0.3">21</text>
<text x="589.5" y="412.7" font-size="7.0" fill="#222" font-weight="bold" textLength="16.2" lengthAdjust="spacingAndGlyphs" stroke="#222" stroke-width="0.08">87.5%</text>
<text x="622.6" y="412.7" font-size="7.0" fill="#222" font-weight="bold" textLength="14.9" lengthAdjust="spacingAndGlyphs" stroke="#222" stroke-width="0.08">17.88</text>
<text x="688.5" y="337.0" font-size="7.7" fill="#1f1f1f" textLength="95" lengthAdjust="spacingAndGlyphs" stroke="#1f1f1f" stroke-width="0.32">Viewership by Age and Gender</text>
<path d="M676 348.3 H945.3" stroke="#ebebeb" stroke-width="0.8" fill="none"/>
<text x="691.8" y="362.6" font-size="6.3" fill="#8a8a8a" stroke="#8a8a8a" stroke-width="0.1">%</text>
<text x="698" y="373.5" font-size="6.3" fill="#8a8a8a" text-anchor="end" stroke="#8a8a8a" stroke-width="0.1">40</text>
<text x="698" y="446.2" font-size="6.3" fill="#8a8a8a" text-anchor="end" stroke="#8a8a8a" stroke-width="0.1">0</text>
<path d="M702.8 371.6 V444.8 H933.8" stroke="#d9d9d9" stroke-width="0.8" fill="none"/>
<rect x="745.41" y="438.58" width="10.3" height="6.22" fill="#f0a08e"/>
<rect x="763.99" y="426.5" width="10.3" height="18.3" fill="#89c9f6"/>
<rect x="792.86" y="377.82" width="10.3" height="66.98" fill="#89c9f6"/>
<rect x="803.16" y="432.72" width="10.3" height="12.08" fill="#f0a08e"/>
<rect x="821.74" y="396.12" width="10.3" height="48.68" fill="#89c9f6"/>
<rect x="832.04" y="438.58" width="10.3" height="6.22" fill="#f0a08e"/>
<rect x="850.61" y="426.5" width="10.3" height="18.3" fill="#89c9f6"/>
<rect x="879.49" y="438.58" width="10.3" height="6.22" fill="#89c9f6"/>
<text x="717.24" y="454.0" font-size="6.3" fill="#8a8a8a" text-anchor="middle" stroke="#8a8a8a" stroke-width="0.1">0~12y</text>
<text x="746.11" y="454.0" font-size="6.3" fill="#8a8a8a" text-anchor="middle" stroke="#8a8a8a" stroke-width="0.1">13~17y</text>
<text x="774.99" y="454.0" font-size="6.3" fill="#8a8a8a" text-anchor="middle" stroke="#8a8a8a" stroke-width="0.1">18~24y</text>
<text x="803.86" y="454.0" font-size="6.3" fill="#8a8a8a" text-anchor="middle" stroke="#8a8a8a" stroke-width="0.1">25~34y</text>
<text x="832.74" y="454.0" font-size="6.3" fill="#8a8a8a" text-anchor="middle" stroke="#8a8a8a" stroke-width="0.1">35~44y</text>
<text x="861.61" y="454.0" font-size="6.3" fill="#8a8a8a" text-anchor="middle" stroke="#8a8a8a" stroke-width="0.1">45~54y</text>
<text x="890.49" y="454.0" font-size="6.3" fill="#8a8a8a" text-anchor="middle" stroke="#8a8a8a" stroke-width="0.1">55~64y</text>
<text x="919.36" y="454.0" font-size="6.3" fill="#8a8a8a" text-anchor="middle" stroke="#8a8a8a" stroke-width="0.1">65+y</text>
<rect x="694" y="457.6" width="12.3" height="6.7" fill="#89c9f6"/>
<text x="709" y="463.5" font-size="6.3" fill="#555" textLength="14" lengthAdjust="spacingAndGlyphs" stroke="#555" stroke-width="0.1">Male</text>
<rect x="728.5" y="457.6" width="12.2" height="6.7" fill="#f0a08e"/>
<text x="743.4" y="463.5" font-size="6.3" fill="#555" textLength="20.3" lengthAdjust="spacingAndGlyphs" stroke="#555" stroke-width="0.1">Female</text>
<circle cx="941.5" cy="462.8" r="8.6" fill="#fff" fill-opacity="0.8"/>
<circle cx="941.5" cy="462.8" r="8.0" fill="#6a6a6a"/>
<path d="M941.5 458.6 V464.2 M939.2 462.0 L941.5 464.3 L943.8 462.0" stroke="#fff" stroke-width="0.9" fill="none"/>
<rect x="938.7" y="465.4" width="5.6" height="1.5" fill="#f2f2f2"/>
<path d="M0 1 H3.2 L0 4.4 Z" fill="#222"/>
<path d="M0 475.8 L3.6 479.4 H0 Z" fill="#222"/>
<path d="M960 476.2 L957.2 479.2 H960 Z" fill="#222"/>
<path d="M956.6 1 H960 V4.4 Z" fill="#333"/>
</svg>
<div class="a" style="left:109px;top:33px;width:410px;height:27px;border:4px solid #ff0000;filter:drop-shadow(2px 2.5px 2px rgba(0,0,0,0.45))"></div>
</body></html>
